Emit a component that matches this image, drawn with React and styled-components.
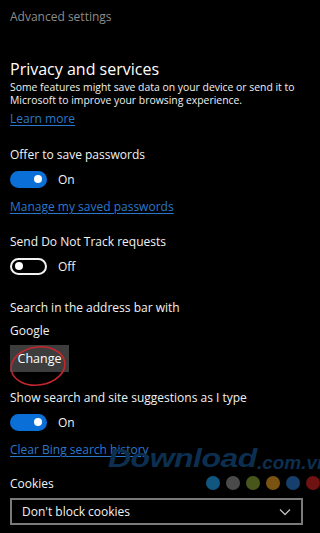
import React from 'react';
import styled, { createGlobalStyle } from 'styled-components';

const Global = createGlobalStyle`
  html, body { margin: 0; padding: 0; background: #000; }
  body { font-family: "Open Sans", "Noto Sans", sans-serif; }
`;

const Page = styled.div`
  position: relative;
  width: 320px;
  height: 533px;
  overflow: hidden;
  box-sizing: border-box;
  padding: 7px 10px 0;
  background: #000;
  color: #f2f2f2;
  display: flex;
  flex-direction: column;
  align-items: flex-start;
`;

const Header = styled.div`
  font-size: 12px;
  line-height: 20px;
  color: #8c8c8c;
`;

const Title = styled.h1`
  margin: 31px 0 0;
  font-size: 16px;
  font-weight: 400;
  line-height: 22px;
  color: #fff;
`;

const Desc = styled.p`
  margin: 1px 0 0;
  font-size: 10.4px;
  line-height: 13px;
  color: #f0f0f0;
  white-space: nowrap;
`;

const Label = styled.div`
  margin-top: ${p => p.$mt || 0}px;
  font-size: 12px;
  line-height: 18px;
  color: #f2f2f2;
`;

const Link = styled.a`
  display: block;
  margin-top: ${p => p.$mt || 0}px;
  font-size: 12px;
  line-height: 18px;
  color: #2a78cc;
  text-decoration: underline;
  text-underline-offset: 2px;
`;

const ToggleRow = styled.div`
  display: flex;
  align-items: center;
  gap: 11px;
  height: 24px;
  margin-top: ${p => p.$mt || 3}px;
  font-size: 12px;
`;

const Track = styled.div`
  position: relative;
  box-sizing: border-box;
  width: 37px;
  height: 17px;
  border-radius: 9px;
  background: ${p => (p.$on ? '#0a6fd6' : 'transparent')};
  border: 2px solid ${p => (p.$on ? '#0a6fd6' : '#f2f2f2')};
`;

const Knob = styled.span`
  position: absolute;
  top: 2.5px;
  left: ${p => (p.$on ? '22px' : '3px')};
  width: 8px;
  height: 8px;
  border-radius: 50%;
  background: #fff;
`;

const Toggle = ({ on }) => (
  <ToggleRow>
    <Track $on={on}>
      <Knob $on={on} />
    </Track>
    <span>{on ? 'On' : 'Off'}</span>
  </ToggleRow>
);

const ButtonWrap = styled.div`
  position: relative;
  margin-top: 5px;
`;

const Button = styled.button`
  display: block;
  width: 59px;
  height: 27px;
  padding: 0;
  border: none;
  background: #3d3d3d;
  color: #fff;
  font-family: inherit;
  font-size: 12.5px;
`;

// red hand-drawn annotation around the Change button
const Circle = styled.svg`
  position: absolute;
  left: 0;
  top: 0;
  overflow: visible;
  pointer-events: none;
`;

const Select = styled.div`
  display: flex;
  align-items: center;
  justify-content: space-between;
  box-sizing: border-box;
  width: 293px;
  height: 27px;
  margin-top: 5px;
  padding: 0 10px;
  border: 2px solid #7a7a7a;
  font-size: 12px;
`;

const Watermark = styled.div`
  position: absolute;
  left: 108px;
  top: 440px;
  display: flex;
  align-items: baseline;
  color: #0c2f50;
  font-family: "Liberation Sans", Arial, sans-serif;
  font-style: italic;
  font-weight: 700;
  pointer-events: none;
`;

const WmBig = styled.span`
  font-size: 32px;
  letter-spacing: -0.5px;
  transform: scaleY(0.8);
  display: inline-block;
`;

const WmSmall = styled.span`
  font-size: 19px;
`;

const Dots = styled.div`
  position: absolute;
  left: 206px;
  top: 476px;
  display: flex;
  gap: 6px;
`;

const Dot = styled.span`
  width: 14px;
  height: 14px;
  border-radius: 50%;
  background: ${p => p.$c};
`;

export default function App() {
  return (
    <Page>
      <Global />
      <Header>Advanced settings</Header>
      <Title>Privacy and services</Title>
      <Desc>
        Some features might save data on your device or send it to
        <br />
        Microsoft to improve your browsing experience.
      </Desc>
      <Link $mt={3}>Learn more</Link>

      <Label $mt={18}>Offer to save passwords</Label>
      <Toggle on />
      <Link $mt={7}>Manage my saved passwords</Link>

      <Label $mt={17}>Send Do Not Track requests</Label>
      <Toggle on={false} />

      <Label $mt={21}>Search in the address bar with</Label>
      <Label $mt={5}>Google</Label>
      <ButtonWrap>
        <Button>Change</Button>
        <Circle width="60" height="45">
          <ellipse cx="28" cy="21" rx="27" ry="19" fill="none" stroke="#c4262e" strokeWidth="1.6" transform="rotate(-8 28 21)" />
        </Circle>
      </ButtonWrap>

      <Label $mt={17}>Show search and site suggestions as I type</Label>
      <Toggle on />
      <Link $mt={7}>Clear Bing search history</Link>

      <Label $mt={16}>Cookies</Label>
      <Select>
        <span>Don't block cookies</span>
        <svg width="12" height="8" viewBox="0 0 12 8">
          <path d="M1 1.5 L6 6.5 L11 1.5" fill="none" stroke="#bdbdbd" strokeWidth="1.3" />
        </svg>
      </Select>

      <Watermark>
        <WmBig>Download</WmBig>
        <WmSmall>.com.vn</WmSmall>
      </Watermark>
      <Dots>
        {['#10567f', '#4a4a4a', '#48561c', '#7a5212', '#163f6c', '#6e1212'].map(c => (
          <Dot key={c} $c={c} />
        ))}
      </Dots>
    </Page>
  );
}
